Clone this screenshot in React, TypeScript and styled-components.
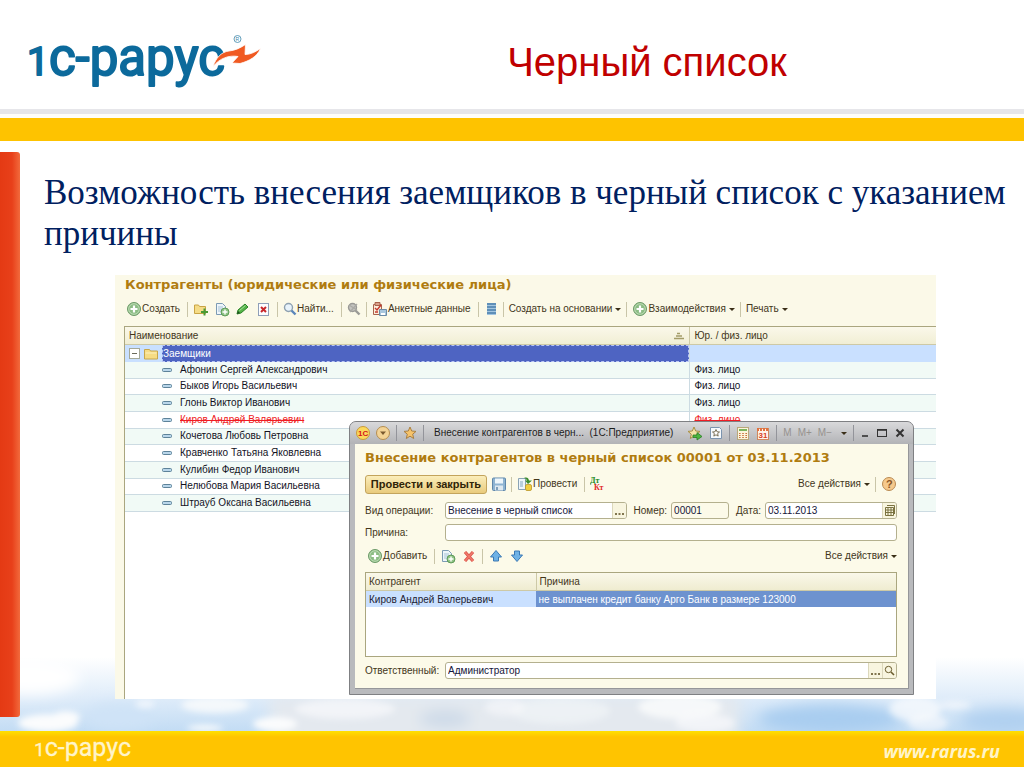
import React from 'react';
import styled, { createGlobalStyle, css } from 'styled-components';

const GlobalStyle = createGlobalStyle`
  *, *::before, *::after { box-sizing: border-box; }
  body { margin: 0; background: #fff; font-family: "Liberation Sans", Arial, sans-serif; }
  button, input { font: inherit; color: inherit; margin: 0; }
  svg { display: block; flex: none; }
`;

const ink = '#43361a';
const line = '#aaa67f';

/* ---------- slide frame ---------- */

const Slide = styled.div`
  min-height: 100vh;
  display: flex;
  flex-direction: column;
`;

const SlideHeader = styled.header`
  display: grid;
  grid-template-columns: 270px 1fr;
  align-items: center;
  height: 109px;
  padding-top: 14px;
`;

const SlideTitle = styled.h1`
  margin: 0;
  color: #c00000;
  font-size: 40px;
  line-height: 46px;
  font-weight: 400;
  text-align: center;
`;

const Stripe = styled.div`
  height: 32px;
  background: linear-gradient(#e6e6ea 0 5px, #fffefa 5px 9px, #fec300 9px);
`;

const SlideBody = styled.div`
  position: relative;
  flex: 1;
  display: flex;
`;

const RedBar = styled.div`
  position: relative;
  flex: none;
  width: 20px;
  margin: 11px 0 14px;
  border-radius: 0 3px 3px 0;
  background: linear-gradient(90deg, #e43a14, #e8401a 60%, #f26a3c);
`;

const Content = styled.main`
  position: relative;
  flex: 1;
  display: flex;
  flex-direction: column;
  padding: 31px 0 32px 24px;
`;

const Lead = styled.p`
  margin: 0 0 21px;
  color: #002060;
  font-family: "Liberation Serif", "Times New Roman", serif;
  font-size: 35px;
  line-height: 41px;
`;

const Clouds = styled.svg`
  position: absolute;
  left: 0;
  bottom: 0;
  width: 100%;
  height: 74px;
`;

const SlideFooter = styled.footer`
  position: relative;
  display: flex;
  align-items: center;
  justify-content: space-between;
  height: 36px;
  padding: 4px 24px 0 34px;
  background: linear-gradient(#ffe000, #ffc400 6px);
`;

const SiteLink = styled.a`
  color: #fff4c8;
  font: italic bold 18px/24px "Open Sans", sans-serif;
  text-decoration: none;
`;

/* ---------- shared application parts ---------- */

const Panel = styled.section`
  position: relative;
  flex: 1;
  display: flex;
  flex-direction: column;
  min-height: 424px;
  margin: 0 88px 0 71px;
  padding-left: 9px;
  background: #fbf9e8;
  color: ${ink};
  font-size: 10px;
  line-height: 16px;
`;

const FormTitle = styled.h2`
  margin: 0;
  padding-left: 1px;
  color: #b07c10;
  font: bold 13px/20px "DejaVu Sans", Verdana, sans-serif;
`;

const Toolbar = styled.div`
  display: flex;
  align-items: center;
  gap: 5px;
  height: 22px;
`;

const ListCommands = styled(Toolbar)`
  margin-top: 3px;
  padding-left: 2px;
`;

const Separator = styled.span`
  flex: none;
  width: 1px;
  height: 15px;
  background: #c9c5a8;
`;

const Spacer = styled.span`
  flex: 1;
`;

const ToolButton = styled.button<{ $drop?: boolean }>`
  display: flex;
  align-items: center;
  border: 0;
  padding: 0;
  background: none;
  line-height: 16px;
  white-space: nowrap;
  ${p => p.$drop && css`
    &::after {
      content: "";
      margin-left: 3px;
      border: 3px solid transparent;
      border-top-color: #3a2f18;
      border-bottom: 0;
    }
  `}
`;

const Label = styled.span<{ $end?: boolean }>`
  padding-right: ${p => (p.$end ? 2 : 0)}px;
`;

/* ---------- counterparties list ---------- */

const ListArea = styled.div`
  flex: 1;
  margin-top: 6px;
  border-top: 1px solid ${line};
  border-left: 1px solid ${line};
  background: #fff;
`;

const ListTable = styled.table`
  width: 100%;
  height: 185px;
  table-layout: fixed;
  border-collapse: separate;
  border-spacing: 0;
  color: #12121e;
  line-height: 14px;

  th, td { padding: 0 4px; text-align: left; font-weight: 400; overflow: hidden; white-space: nowrap; }
  th { height: 18px; border-bottom: 1px solid #cdc9a6; background: linear-gradient(#faf8ea, #f1eed4); color: ${ink}; }
  th + th { border-left: 1px solid #cdc9a6; }
  td { border-bottom: 1px solid #ccdbe2; }
  td + td { border-left: 1px solid #ccdbe2; }
`;

const NameColumn = styled.col`
  width: 69.6%;
`;

const HeadCell = styled.div`
  display: flex;
  align-items: center;
  justify-content: space-between;
`;

const GroupRow = styled.tr`
  background: #c9e0ff;
  && td { height: 17px; padding: 0; border-bottom: 0; }
`;

const GroupCell = styled.div`
  display: flex;
  align-items: center;
  height: 17px;
  padding-left: 4px;
  gap: 4px;
`;

const GroupName = styled.span`
  flex: 1;
  height: 17px;
  border: 1px dashed #b9c6f4;
  background: #4e64c2;
  color: #fff;
  line-height: 16px;
`;

const PersonRow = styled.tr<{ $tint: boolean; $blocked?: boolean }>`
  background: ${p => (p.$tint ? '#f1faf6' : '#fff')};
  ${p => p.$blocked && css`color: #f01c24; text-decoration: line-through;`}
`;

const PersonCell = styled.div`
  display: flex;
  align-items: center;
  gap: 8px;
  padding-left: 33px;
`;

/* ---------- dialog ---------- */

const Dialog = styled.section`
  position: absolute;
  top: 146px;
  right: 22px;
  bottom: 4px;
  left: 234px;
  display: flex;
  flex-direction: column;
  padding: 0 4px 5px 5px;
  border: 1px solid #7f8083;
  border-radius: 7px 7px 0 0;
  background: #b9babd;
`;

const TitleBar = styled.header`
  display: flex;
  align-items: center;
  gap: 6px;
  height: 22px;
  margin: 0 -4px 0 -5px;
  padding: 0 7px 0 6px;
  border-radius: 6px 6px 0 0;
  background: linear-gradient(#d9d9db, #b2b3b6);
  color: #1c1c1c;
`;

const BarSeparator = styled.span`
  width: 1px;
  height: 16px;
  background: #93949a;
`;

const WindowTitle = styled.span`
  flex: 1;
  padding-left: 4px;
  white-space: pre;
`;

const MemoryButton = styled(ToolButton)`
  color: #96928e;
`;

const DialogBody = styled.div`
  flex: 1;
  display: flex;
  flex-direction: column;
  padding: 4px 11px 9px 10px;
  border: 1px solid #96979a;
  border-width: 0 1px 1px 0;
  background: #fcfae9;
`;

const DialogTitle = styled(FormTitle)`
  padding: 0;
`;

const CommandBar = styled(Toolbar)`
  margin: 5px 0 7px;
`;

const ListBar = styled(Toolbar)`
  margin: 4px 0 5px;
  padding-left: 2px;
`;

const PrimaryButton = styled.button`
  height: 19px;
  width: 122px;
  padding: 0;
  border: 1px solid #c3a45c;
  border-radius: 3px;
  background: linear-gradient(#fbeebb, #e9cb7d);
  color: #2f2408;
  font-size: 11px;
  line-height: 16px;
  font-weight: 700;
  white-space: nowrap;
`;

const FieldRow = styled.div`
  display: flex;
  align-items: center;
  height: 17px;
  & + & { margin-top: 5px; }
`;

const FieldLabel = styled.label<{ $inline?: boolean }>`
  flex: none;
  width: ${p => (p.$inline ? 'auto' : '80px')};
  ${p => p.$inline && css`padding: 0 4px 0 7px;`}
`;

const FieldBox = styled.div<{ $width?: number; $readOnly?: boolean }>`
  display: flex;
  flex: ${p => (p.$width ? `0 0 ${p.$width}px` : '1')};
  height: 17px;
  border: 1px solid #b4b08e;
  border-radius: 3px;
  background: ${p => (p.$readOnly ? '#fcfae9' : '#fff')};
  overflow: hidden;
`;

const Field = styled.input`
  flex: 1;
  min-width: 0;
  padding: 0 2px;
  border: 0;
  background: none;
  color: #15153a;
  outline: none;
`;

const FieldButton = styled.button`
  display: flex;
  align-items: center;
  justify-content: center;
  width: 14px;
  padding: 0;
  border: 0;
  border-left: 1px solid #dcd8bc;
  background: #f8f5df;
`;

const ReasonArea = styled.div`
  flex: 1;
  margin-bottom: 5px;
  border: 1px solid ${line};
  background: #fff;
`;

const ReasonTable = styled.table`
  width: 100%;
  table-layout: fixed;
  border-collapse: separate;
  border-spacing: 0;
  line-height: 15px;

  th, td { padding: 0 3px; text-align: left; font-weight: 400; white-space: nowrap; }
  th { height: 18px; border-bottom: 1px solid #cdc9a6; background: linear-gradient(#faf8ea, #efecd0); }
  th + th { border-left: 1px solid #cdc9a6; }
  td { height: 16px; background: #c9e0ff; color: #1d1d33; }
  td + td { background: #6d92cf; color: #fff; }
`;

const ReasonColumn = styled.col`
  width: 32%;
`;

/* ---------- drawings ---------- */

const Wordmark = ({ size, color, weight }: { size: number; color: string; weight: number }) => (
  <text
    x="0"
    y="0"
    fontFamily="Roboto, sans-serif"
    fontSize={size}
    fill={color}
    stroke={color}
    strokeWidth={weight}
    strokeLinejoin="round"
  >
    <tspan fontSize={Math.round(size * 0.76)}>1</tspan>с-рарус
  </text>
);

const Logo = () => (
  <svg width="270" height="80" viewBox="0 24 270 80" role="img" aria-label="1С-Рарус">
    <g transform="translate(27 77)"><Wordmark size={51} color="#0c6a9c" weight={2} /></g>
    <path
      d="M213 68.500C216 60 221 54 229 53C235 52.500 240 50 245.500 46.500L245 56.500C251 56.500 256 53.500 260.500 50.500C257 59 249 63 240 65.500L232 65L238 58.500C229 57 220 60 213 68.500Z"
      fill="#f05a22"
      stroke="#fff"
      strokeWidth=".8"
    />
    <circle cx="237.500" cy="41" r="3.500" fill="none" stroke="#3d86ab" strokeWidth=".8" />
    <text x="235.500" y="43" fontSize="5" fill="#3d86ab">R</text>
  </svg>
);

const FooterLogo = () => (
  <svg width="110" height="32" viewBox="0 0 110 32" role="img" aria-label="1С-Рарус">
    <g transform="translate(0 21)"><Wordmark size={25} color="#fff4c8" weight={0.3} /></g>
  </svg>
);

const Sky = () => (
  <Clouds viewBox="0 0 1024 74" preserveAspectRatio="none" aria-hidden="true">
    <defs>
      <linearGradient id="sky" x1="0" y1="0" x2="0" y2="1">
        <stop offset="0" stopColor="#fff" />
        <stop offset=".5" stopColor="#e2eefa" />
        <stop offset="1" stopColor="#c3dcf4" />
      </linearGradient>
      <filter id="soft" x="-20%" y="-50%" width="140%" height="200%"><feGaussianBlur stdDeviation="7" /></filter>
      <filter id="puff" x="-20%" y="-50%" width="140%" height="200%"><feGaussianBlur stdDeviation="3" /></filter>
    </defs>
    <rect width="1024" height="74" fill="url(#sky)" />
    <g filter="url(#soft)">
      <rect x="270" y="38" width="470" height="50" fill="#e4e9ef" />
      <ellipse cx="830" cy="62" rx="72" ry="15" fill="#a9cdf0" />
      <ellipse cx="1005" cy="64" rx="45" ry="12" fill="#b0d0f0" />
      <ellipse cx="30" cy="20" rx="50" ry="18" fill="#fff" />
      <ellipse cx="445" cy="62" rx="26" ry="9" fill="#cddae8" />
      <ellipse cx="120" cy="60" rx="34" ry="14" fill="#cfe3f7" />
    </g>
    <g filter="url(#puff)" fill="#fbfcfd">
      <ellipse cx="48" cy="66" rx="30" ry="9" />
      <ellipse cx="66" cy="60" rx="14" ry="6" />
      <ellipse cx="145" cy="47" rx="10" ry="4" opacity=".7" />
      <ellipse cx="215" cy="48" rx="34" ry="8" opacity=".8" />
      <ellipse cx="205" cy="71" rx="18" ry="3" />
      <ellipse cx="275" cy="67" rx="22" ry="7" />
      <ellipse cx="345" cy="52" rx="50" ry="10" opacity=".6" />
      <ellipse cx="505" cy="50" rx="20" ry="9" opacity=".5" />
      <ellipse cx="560" cy="54" rx="50" ry="13" opacity=".4" />
      <ellipse cx="680" cy="50" rx="42" ry="12" opacity=".8" />
      <ellipse cx="705" cy="66" rx="30" ry="9" opacity=".6" />
      <ellipse cx="915" cy="52" rx="26" ry="12" opacity=".7" />
      <ellipse cx="928" cy="66" rx="20" ry="9" opacity=".6" />
      <ellipse cx="955" cy="48" rx="16" ry="4" opacity=".6" />
    </g>
  </Clouds>
);

const Svg = ({ w = 16, children }: { w?: number; children: React.ReactNode }) => (
  <svg width={w} height="16" viewBox={`0 0 ${w} 16`} fill="none" aria-hidden="true">{children}</svg>
);

const PlusCircle = () => (
  <Svg>
    <circle cx="8" cy="8" r="6.500" fill="#8dbd85" stroke="#6d9a68" />
    <circle cx="8" cy="8" r="5.300" stroke="#c9e3c2" strokeWidth=".8" />
    <path d="M8 4.500v7M4.500 8h7" stroke="#fff" strokeWidth="2.200" />
  </Svg>
);

const SmallPlus = () => (
  <>
    <circle cx="11" cy="11" r="4" fill="#8fc284" stroke="#4d8f48" strokeWidth=".8" />
    <path d="M11 8.500v5M8.500 11h5" stroke="#fff" strokeWidth="1.400" />
  </>
);

const FolderPlus = () => (
  <Svg>
    <path d="M1.500 4h4l1 1.500h6v7h-11z" fill="#f5dc86" stroke="#c9a444" />
    <path d="M11.500 7.500v7M8 11h7" stroke="#4a9a34" strokeWidth="2" />
  </Svg>
);

const DocPlus = () => (
  <Svg>
    <path d="M2.500 2.500h6l3 3v8h-9z" fill="#eef5fa" stroke="#7c9bb4" />
    <path d="M4 6h5M4 8h4M4 10h3" stroke="#a7c3d6" />
    <SmallPlus />
  </Svg>
);

const Pencil = () => (
  <Svg>
    <path d="M2 13l1-4 7-6 3 3-7 6z" fill="#55b548" stroke="#2b8228" />
    <path d="M2 13l1-3 2 2z" fill="#1f4f1d" />
    <path d="M4.500 9.500l6-5" stroke="#a9e09d" />
  </Svg>
);

const DeleteMark = () => (
  <Svg>
    <rect x="2.500" y="2.500" width="10" height="12" fill="#fdfdff" stroke="#8f9fb8" />
    <path d="M5 6l5 5M10 6l-5 5" stroke="#c8262a" strokeWidth="2" />
  </Svg>
);

const Magnifier = ({ dim }: { dim?: boolean }) => (
  <Svg w={14}>
    <circle cx="5.500" cy="6.500" r="4" fill={dim ? '#c4c4c0' : '#e8f3fb'} stroke={dim ? '#9a9a96' : '#8ea1b0'} strokeWidth="1.400" />
    <path d="M8.500 9.500l4 4" stroke={dim ? '#9a9a96' : '#5b86ba'} strokeWidth="2.400" />
    {dim && <path d="M3 11l7-8M2 4l8 5" stroke="#a9a9a4" strokeWidth="1.400" />}
  </Svg>
);

const FormData = () => (
  <Svg>
    <path d="M1.500 3.500h8v10h-8z" fill="#fbeeda" stroke="#a8624b" />
    <path d="M3 1.500h5v3H3z" fill="#d9a08a" stroke="#a8624b" />
    <path d="M3 7l2 2 4-5M3 11h3" stroke="#c4382e" strokeWidth="1.400" />
    <path d="M7.500 8.500h7v6h-7z" fill="#a9c7de" stroke="#6b8ba6" />
    <path d="M9 12h4v2H9z" fill="#fff" />
  </Svg>
);

const Register = () => (
  <Svg w={14}>
    <rect x="3" y="2" width="9" height="12" fill="#5f8fb8" />
    <path d="M3 4.500h9M3 7.500h9M3 10.500h9M3 13.500h9" stroke="#a9cbe4" strokeWidth=".9" />
  </Svg>
);

const SortMark = () => (
  <svg width="12" height="10" viewBox="0 0 12 10" aria-hidden="true">
    <path d="M4 2.500h3M3 5h6M1 7.500h10" stroke="#a39c68" strokeWidth="1.500" />
  </svg>
);

const TreeToggle = () => (
  <svg width="11" height="11" viewBox="0 0 11 11" aria-hidden="true">
    <rect x=".5" y=".5" width="10" height="10" fill="#fff" stroke="#a5a998" />
    <path d="M3 5.500h5" stroke="#6a6a5c" />
  </svg>
);

const Folder = () => (
  <Svg w={14}>
    <path d="M.5 3.500h5l1 1.500h7v8H.5z" fill="#f6dc84" stroke="#c7a64c" />
    <path d="M1.500 7h11" stroke="#fcf0bf" />
  </Svg>
);

const ItemMark = () => (
  <svg width="10" height="6" viewBox="0 0 10 6" aria-hidden="true">
    <rect x=".5" y="1.500" width="9" height="3" rx="1" fill="#b9d6ea" stroke="#5d8299" />
  </svg>
);

const Badge1C = () => (
  <Svg w={14}>
    <circle cx="7" cy="8" r="6.500" fill="#fbd95c" stroke="#c99a3a" />
    <text x="2" y="11" fontFamily="Liberation Sans" fontSize="8" fontWeight="700" fill="#d3121a">1С</text>
  </Svg>
);

const CircleDown = () => (
  <Svg w={14}>
    <circle cx="7" cy="8" r="6.500" fill="#f3d395" stroke="#b58e50" />
    <path d="M4 6.500h6L7 10z" fill="#7a5a30" />
  </Svg>
);

const starPath = 'M7 2l1.700 4 4.300.4-3.300 2.800 1 4.300L7 11.200l-3.700 2.300 1-4.300L1 6.400 5.300 6z';

const Star = () => <Svg w={14}><path d={starPath} fill="#f6c36a" stroke="#a98043" /></Svg>;

const StarArrow = () => (
  <Svg>
    <path d={starPath} fill="#f4e3a8" stroke="#a98f43" />
    <path d="M6 10h4V7.500l5 4-5 3.500v-2.500H6z" fill="#4cb53f" stroke="#2b7f26" strokeWidth=".8" />
  </Svg>
);

const DocStar = () => (
  <Svg w={14}>
    <path d="M1.500 2.500h9l2 2v9h-11z" fill="#f6fafd" stroke="#7b94ae" />
    <path d="M7 4.500l1 2.300 2.500.2-1.900 1.600.6 2.500L7 9.800l-2.200 1.300.6-2.500L3.500 7 6 6.800z" fill="#fff" stroke="#6d6347" strokeWidth=".9" />
  </Svg>
);

const Calculator = () => (
  <Svg w={14}>
    <rect x="1.500" y="2.500" width="11" height="12" fill="#fbf5dc" stroke="#b9a77a" />
    <path d="M3 5h8" stroke="#7cb35c" strokeWidth="2" />
    <path d="M3 8.500h8M3 10.500h8M3 12.500h8" stroke="#c9703c" strokeWidth="1.200" strokeDasharray="1.600 1.600" />
  </Svg>
);

const Calendar = () => (
  <Svg w={14}>
    <rect x="1.500" y="3.500" width="11" height="11" fill="#fff3ea" stroke="#d0875e" />
    <path d="M1 4.500h12" stroke="#e2713e" strokeWidth="3" strokeDasharray="2 1" />
    <text x="2.500" y="13" fontFamily="Liberation Sans" fontSize="8" fontWeight="700" fill="#d8401e">31</text>
  </Svg>
);

const Minimize = () => <Svg w={10}><path d="M2 11h6" stroke="#333" strokeWidth="1.600" /></Svg>;
const Maximize = () => (
  <Svg w={12}>
    <rect x="1.500" y="4.500" width="9" height="7" stroke="#333" />
    <path d="M1 5h10" stroke="#333" strokeWidth="1.600" />
  </Svg>
);
const Close = () => <Svg w={12}><path d="M2.500 4.500l7 7M9.500 4.500l-7 7" stroke="#333" strokeWidth="2" /></Svg>;

const Save = () => (
  <Svg w={14}>
    <rect x=".5" y="2" width="13" height="12.500" rx="1" fill="#8fb4d2" stroke="#5f87aa" />
    <rect x="3" y="2.500" width="8" height="5" fill="#eef6fb" />
    <rect x="3" y="9.500" width="8" height="5" fill="#dfe9f0" />
    <path d="M5 11v3" stroke="#5f87aa" strokeWidth="1.500" />
  </Svg>
);

const PostDoc = () => (
  <Svg>
    <path d="M1.500 2.500h7v11h-7z" fill="#eef5fa" stroke="#8aa3b5" />
    <path d="M3 6h3M3 8h3M3 10h3" stroke="#84a8bf" />
    <path d="M7 2c3-1 4.500 0 5 2.500H15L11 8 8 4.500h2C9.500 3.500 9 2.800 7 2z" fill="#3a8c2e" />
    <rect x="8.500" y="8.500" width="6" height="6" rx="1.500" fill="#f3cf3f" stroke="#b9952a" strokeWidth=".8" />
  </Svg>
);

const DebitCredit = () => (
  <Svg>
    <text x="0" y="7" fontFamily="Liberation Serif" fontSize="8" fontWeight="700" fill="#1c8a26">Дт</text>
    <text x="4" y="14" fontFamily="Liberation Serif" fontSize="8" fontWeight="700" fill="#e02a2a">Кт</text>
  </Svg>
);

const Help = () => (
  <Svg>
    <circle cx="8" cy="8" r="6.500" fill="#f6c98c" stroke="#b98a52" />
    <text x="5" y="12" fontFamily="Liberation Sans" fontSize="11" fontWeight="700" fill="#8a5526">?</text>
  </Svg>
);

const RedCross = () => (
  <Svg>
    <path d="M4 4l8 9M12 4l-8 9" stroke="#d9574c" strokeWidth="3.200" />
    <path d="M4 4l8 9M12 4l-8 9" stroke="#f0786a" strokeWidth="1.600" />
  </Svg>
);

const Arrow = ({ down }: { down?: boolean }) => (
  <Svg>
    <path
      d={down ? 'M5.500 3h5v4h3L8 13.500 2.500 7h3z' : 'M5.500 13h5V9h3L8 2.500 2.500 9h3z'}
      fill="#6fb2e6"
      stroke="#3a78b4"
      strokeLinejoin="round"
    />
  </Svg>
);

const CalendarGrid = () => (
  <svg width="11" height="11" viewBox="0 0 11 11" aria-hidden="true">
    <path d="M1.500 2.500h8v8h-8zM1 5h9M1 7.500h9M4 2v8M7 2v8M3 .5h7.500V9" fill="none" stroke="#7b7240" />
  </svg>
);

const Loupe = () => (
  <svg width="11" height="11" viewBox="0 0 11 11" fill="none" aria-hidden="true">
    <circle cx="4.500" cy="4.500" r="3.200" stroke="#6b5d2e" />
    <path d="M7 7l3 3" stroke="#6b5d2e" strokeWidth="1.600" />
  </svg>
);

const Dots = () => (
  <svg width="9" height="11" viewBox="0 0 9 11" aria-hidden="true">
    <path d="M0 9h2M3.500 9h2M7 9h2" stroke="#5a4c20" strokeWidth="1.600" />
  </svg>
);

/* ---------- data ---------- */

const people = [
  { name: 'Афонин Сергей Александрович' },
  { name: 'Быков Игорь Васильевич' },
  { name: 'Глонь Виктор Иванович' },
  { name: 'Киров Андрей Валерьевич', blocked: true },
  { name: 'Кочетова Любовь Петровна' },
  { name: 'Кравченко Татьяна Яковлевна' },
  { name: 'Кулибин Федор Иванович' },
  { name: 'Нелюбова Мария Васильевна' },
  { name: 'Штрауб Оксана Васильевна' },
];

/* ---------- screens ---------- */

const ListToolbar = () => (
  <ListCommands>
    <ToolButton><PlusCircle /><Label $end>Создать</Label></ToolButton>
    <Separator />
    <ToolButton aria-label="Создать группу"><FolderPlus /></ToolButton>
    <ToolButton aria-label="Скопировать"><DocPlus /></ToolButton>
    <ToolButton aria-label="Изменить"><Pencil /></ToolButton>
    <ToolButton aria-label="Пометить на удаление"><DeleteMark /></ToolButton>
    <Separator />
    <ToolButton><Magnifier /><Label $end>Найти...</Label></ToolButton>
    <Separator />
    <ToolButton aria-label="Отменить поиск"><Magnifier dim /></ToolButton>
    <Separator />
    <ToolButton><FormData /><Label $end>Анкетные данные</Label></ToolButton>
    <Separator />
    <ToolButton aria-label="Регистр"><Register /></ToolButton>
    <Separator />
    <ToolButton $drop>Создать на основании</ToolButton>
    <Separator />
    <ToolButton $drop><PlusCircle />Взаимодействия</ToolButton>
    <Separator />
    <ToolButton $drop>Печать</ToolButton>
  </ListCommands>
);

const Counterparties = () => (
  <ListArea>
    <ListTable>
      <colgroup><NameColumn /><col /></colgroup>
      <thead>
        <tr>
          <th><HeadCell>Наименование<SortMark /></HeadCell></th>
          <th>Юр. / физ. лицо</th>
        </tr>
      </thead>
      <tbody>
        <GroupRow>
          <td><GroupCell><TreeToggle /><Folder /><GroupName>Заемщики</GroupName></GroupCell></td>
          <td />
        </GroupRow>
        {people.map((p, i) => (
          <PersonRow key={p.name} $tint={i % 2 === 0} $blocked={p.blocked}>
            <td><PersonCell><ItemMark /><span>{p.name}</span></PersonCell></td>
            <td>{i < 4 && 'Физ. лицо'}</td>
          </PersonRow>
        ))}
      </tbody>
    </ListTable>
  </ListArea>
);

const BlacklistDialog = () => (
  <Dialog role="dialog" aria-label="Внесение контрагентов в черный список">
    <TitleBar>
      <Badge1C />
      <ToolButton aria-label="Меню"><CircleDown /></ToolButton>
      <BarSeparator />
      <ToolButton aria-label="Избранное"><Star /></ToolButton>
      <BarSeparator />
      <WindowTitle>Внесение контрагентов в черн...  (1С:Предприятие)</WindowTitle>
      <ToolButton aria-label="Добавить в избранное"><StarArrow /></ToolButton>
      <ToolButton aria-label="Ссылка"><DocStar /></ToolButton>
      <BarSeparator />
      <ToolButton aria-label="Калькулятор"><Calculator /></ToolButton>
      <ToolButton aria-label="Календарь"><Calendar /></ToolButton>
      <BarSeparator />
      <MemoryButton>M</MemoryButton>
      <MemoryButton>M+</MemoryButton>
      <MemoryButton>M−</MemoryButton>
      <ToolButton $drop aria-label="Ещё" />
      <BarSeparator />
      <ToolButton aria-label="Свернуть"><Minimize /></ToolButton>
      <ToolButton aria-label="Развернуть"><Maximize /></ToolButton>
      <ToolButton aria-label="Закрыть"><Close /></ToolButton>
    </TitleBar>
    <DialogBody>
      <DialogTitle>Внесение контрагентов в черный список 00001 от 03.11.2013</DialogTitle>
      <CommandBar>
        <PrimaryButton>Провести и закрыть</PrimaryButton>
        <ToolButton aria-label="Записать"><Save /></ToolButton>
        <Separator />
        <ToolButton><PostDoc /><Label $end>Провести</Label></ToolButton>
        <Separator />
        <ToolButton aria-label="Проводки"><DebitCredit /></ToolButton>
        <Spacer />
        <ToolButton $drop>Все действия</ToolButton>
        <Separator />
        <ToolButton aria-label="Справка"><Help /></ToolButton>
      </CommandBar>
      <FieldRow>
        <FieldLabel htmlFor="kind">Вид операции:</FieldLabel>
        <FieldBox>
          <Field id="kind" defaultValue="Внесение в черный список" />
          <FieldButton aria-label="Выбрать вид операции"><Dots /></FieldButton>
        </FieldBox>
        <FieldLabel $inline htmlFor="number">Номер:</FieldLabel>
        <FieldBox $width={58} $readOnly><Field id="number" defaultValue="00001" /></FieldBox>
        <FieldLabel $inline htmlFor="date">Дата:</FieldLabel>
        <FieldBox $width={132}>
          <Field id="date" defaultValue="03.11.2013" />
          <FieldButton aria-label="Выбрать дату"><CalendarGrid /></FieldButton>
        </FieldBox>
      </FieldRow>
      <FieldRow>
        <FieldLabel htmlFor="reason">Причина:</FieldLabel>
        <FieldBox><Field id="reason" /></FieldBox>
      </FieldRow>
      <ListBar>
        <ToolButton><PlusCircle /><Label $end>Добавить</Label></ToolButton>
        <Separator />
        <ToolButton aria-label="Скопировать"><DocPlus /></ToolButton>
        <ToolButton aria-label="Удалить"><RedCross /></ToolButton>
        <Separator />
        <ToolButton aria-label="Вверх"><Arrow /></ToolButton>
        <ToolButton aria-label="Вниз"><Arrow down /></ToolButton>
        <Spacer />
        <ToolButton $drop>Все действия</ToolButton>
      </ListBar>
      <ReasonArea>
        <ReasonTable>
          <colgroup><ReasonColumn /><col /></colgroup>
          <thead><tr><th>Контрагент</th><th>Причина</th></tr></thead>
          <tbody>
            <tr>
              <td>Киров Андрей Валерьевич</td>
              <td>не выплачен кредит банку Арго Банк в размере 123000</td>
            </tr>
          </tbody>
        </ReasonTable>
      </ReasonArea>
      <FieldRow>
        <FieldLabel htmlFor="owner">Ответственный:</FieldLabel>
        <FieldBox>
          <Field id="owner" defaultValue="Администратор" />
          <FieldButton aria-label="Выбрать ответственного"><Dots /></FieldButton>
          <FieldButton aria-label="Открыть"><Loupe /></FieldButton>
        </FieldBox>
      </FieldRow>
    </DialogBody>
  </Dialog>
);

export default function App() {
  return (
    <Slide>
      <GlobalStyle />
      <SlideHeader>
        <Logo />
        <SlideTitle>Черный список</SlideTitle>
      </SlideHeader>
      <Stripe />
      <SlideBody>
        <Sky />
        <RedBar />
        <Content>
          <Lead>Возможность внесения заемщиков в черный список с указанием причины</Lead>
          <Panel>
            <FormTitle>Контрагенты (юридические или физические лица)</FormTitle>
            <ListToolbar />
            <Counterparties />
            <BlacklistDialog />
          </Panel>
        </Content>
      </SlideBody>
      <SlideFooter>
        <FooterLogo />
        <SiteLink href="#">www.rarus.ru</SiteLink>
      </SlideFooter>
    </Slide>
  );
}
